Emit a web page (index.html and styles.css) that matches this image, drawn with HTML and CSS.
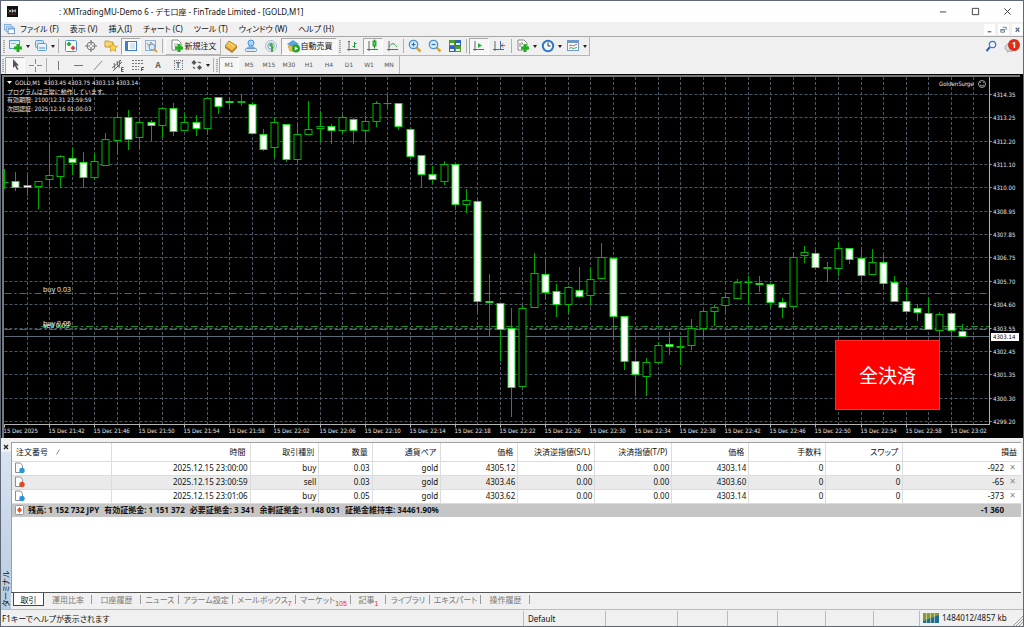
FILE: index.html
```html
<!DOCTYPE html>
<html lang="ja">
<head>
<meta charset="utf-8">
<title>XMTradingMU-Demo 6 - [GOLD,M1]</title>
<link rel="stylesheet" href="styles.css">
</head>
<body>
<div class="window">
  <header class="titlebar">
    <svg class="app-logo" viewBox="0 0 12 12"><rect width="12" height="12" fill="#111"/><path d="M2 4l3 3M5 4L2 7M6 7V4l1.500 2L9 4v3" stroke="#ddd" fill="none"/><path d="M2 9h8" stroke="#944" stroke-width=".6"/></svg>
    <h1 class="title">: XMTradingMU-Demo 6 - デモ口座 - FinTrade Limited - [GOLD,M1]</h1>
    <div class="window-buttons">
      <button aria-label="最小化"><svg viewBox="0 0 10 10"><path d="M1 5.500h7" stroke="#333"/></svg></button>
      <button aria-label="最大化"><svg viewBox="0 0 10 10"><path d="M1.500 1.500h7v7h-7z" stroke="#333" fill="none"/></svg></button>
      <button aria-label="閉じる"><svg viewBox="0 0 10 10"><path d="M1.500 1.500l7 7M8.500 1.500l-7 7" stroke="#333"/></svg></button>
    </div>
  </header>

  <nav class="menubar">
    <svg class="menu-icon" viewBox="0 0 12 12"><rect x=".5" y=".5" width="7" height="6" fill="#e8f2fc" stroke="#7eabd8"/><rect x="2.500" y="2.500" width="7" height="6" fill="#e8f2fc" stroke="#7eabd8"/><rect x="4.500" y="4.500" width="7" height="6" fill="#fff" stroke="#5e95cc"/><path d="M4.500 5.500h7" stroke="#5e95cc"/></svg>
    <button class="menu">ファイル (F)</button>
    <button class="menu">表示 (V)</button>
    <button class="menu">挿入(I)</button>
    <button class="menu">チャート (C)</button>
    <button class="menu">ツール (T)</button>
    <button class="menu">ウィンドウ (W)</button>
    <button class="menu">ヘルプ (H)</button>
    <div class="child-buttons">
      <button aria-label="子ウィンドウを最小化"><svg viewBox="0 0 10 10"><path d="M3 7.500h4" stroke="#5d738c" stroke-width="1.500"/></svg></button>
      <button aria-label="子ウィンドウを元に戻す"><svg viewBox="0 0 10 10"><path d="M4 2.500h4v3M2 5h4v3H2zM2 5.500h4" stroke="#5d738c" fill="none"/></svg></button>
      <button aria-label="子ウィンドウを閉じる"><svg viewBox="0 0 10 10"><path d="M3 3l4 4.500M7 3L3 7.500" stroke="#5d738c" stroke-width="1.500"/></svg></button>
    </div>
  </nav>

  <div class="toolbars">
    <div class="toolbar toolbar-main">
      <i class="grip"></i>
      <button class="tool drop" aria-label="新規チャート"><svg viewBox="0 0 14 14"><rect x=".5" y="1.500" width="10" height="8" fill="#e6f1fb" stroke="#5d9bd3"/><path d="M2 4.500h5" stroke="#8fb9e0"/><path d="M9 5v8M5 9h8" stroke="#1fae1f" stroke-width="3"/></svg></button>
      <button class="tool drop" aria-label="プロファイル"><svg viewBox="0 0 14 14"><rect x="1.500" y="1.500" width="8" height="7" rx="1" fill="#cfe3f6" stroke="#5d9bd3"/><rect x="3.500" y="4.500" width="9" height="7" rx="1" fill="#eaf3fc" stroke="#5d9bd3"/><path d="M5 9h6" stroke="#9bbfe2" stroke-width="2"/></svg></button>
      <i class="sep"></i>
      <button class="tool" aria-label="気配値表示"><svg viewBox="0 0 14 14"><rect x="1.500" y="1.500" width="11" height="11" rx="1" fill="#fff" stroke="#4f90cf"/><path d="M5 2.500L7.500 5 5 7.500 2.500 5z" fill="#20a838"/><path d="M9 6.500L11.500 9 9 11.500 6.500 9z" fill="#e0402c"/></svg></button>
      <button class="tool" aria-label="データウィンドウ"><svg viewBox="0 0 14 14"><circle cx="7" cy="7" r="4" fill="none" stroke="#777"/><path d="M7 1v5M7 8v5M1 7h5M8 7h5" stroke="#777" stroke-width="1.200"/></svg></button>
      <button class="tool" aria-label="ナビゲーター"><svg viewBox="0 0 14 14"><path d="M1 2h4l1 1h3v5H1z" fill="#f7d774" stroke="#c99c32"/><path d="M9 4l1.300 3 3.200.3-2.400 2.100.7 3.100L9 10.800l-2.800 1.700.7-3.100-2.400-2.100 3.200-.3z" fill="#fbd64c" stroke="#cf9a25" stroke-width=".8"/></svg></button>
      <button class="tool pressed" aria-label="ターミナル"><svg viewBox="0 0 14 14"><rect x="1.500" y="2.500" width="11" height="9" fill="#fff" stroke="#3c7fc4"/><path d="M3 3v8" stroke="#3c7fc4" stroke-width="2"/><path d="M6 5h5M6 7h5M6 9h5" stroke="#b9c7d6"/></svg></button>
      <button class="tool" aria-label="ストラテジーテスター"><svg viewBox="0 0 14 14"><rect x="1.500" y="1.500" width="10" height="10" fill="#e3eefa" stroke="#8db2da"/><path d="M3 4l2 3 2-4 2 3" stroke="#c98b62" fill="none"/><circle cx="8" cy="8" r="3" fill="#d7e9fa" stroke="#6d96c2"/><path d="M10 10l3 3" stroke="#d8a63a" stroke-width="2"/></svg></button>
      <i class="sep"></i>
      <button class="tool labelled raised"><svg viewBox="0 0 14 14"><path d="M2 1h6l3 3v7H2z" fill="#fff" stroke="#888"/><path d="M4 5h4M4 7h3" stroke="#aaa"/><path d="M9 5v8M5 9h8" stroke="#1fae1f" stroke-width="3"/></svg>新規注文</button>
      <button class="tool" aria-label="MetaEditor"><svg viewBox="0 0 14 14"><path d="M5 2l8 5-5 5-7-5z" fill="#f2c04a" stroke="#b98420"/><path d="M1 7v2l7 5 5-5V7l-5 5z" fill="#b9822a"/><path d="M5 4l5 3" stroke="#fae3a0"/></svg></button>
      <button class="tool" aria-label="MQL5コミュニティ"><svg viewBox="0 0 14 14"><circle cx="7" cy="4" r="3" fill="#a7d3f5" stroke="#4293d8"/><path d="M2.500 10c0-4 9-4 9 0" fill="#69b0ea"/><rect x="1.500" y="9.500" width="11" height="3" rx="1" fill="#d9e9f7" stroke="#6b99c2"/></svg></button>
      <button class="tool" aria-label="シグナル"><svg viewBox="0 0 14 14"><circle cx="7" cy="7" r="5.500" fill="none" stroke="#a4bfd3"/><circle cx="7" cy="7" r="3.200" fill="none" stroke="#6fa1c5"/><circle cx="7" cy="6" r="1.800" fill="#47a447"/><path d="M8 7v6" stroke="#47a447" stroke-width="2"/></svg></button>
      <button class="tool labelled pressed"><svg viewBox="0 0 14 14"><path d="M1 5l6-4 6 4-3 2H4z" fill="#5aa3dc"/><path d="M2 7h9l-2 5H4z" fill="#f3c247" stroke="#c49226" stroke-width=".6"/><circle cx="10" cy="9.500" r="4" fill="#28a32c"/><path d="M8.800 7.500v4l3.400-2z" fill="#fff"/></svg>自動売買</button>
      <i class="grip"></i>
      <button class="tool" aria-label="バーチャート"><svg viewBox="0 0 14 14"><path d="M3 2v10M1 10.500h11M2 3l1-1 1 1" stroke="#666" fill="none"/><path d="M8.500 3v6M6.500 7.500h2M8.500 4.500h2" stroke="#239b35"/></svg></button>
      <button class="tool pressed" aria-label="ローソク足"><svg viewBox="0 0 14 14"><path d="M3 2v10M1 10.500h11" stroke="#666"/><path d="M8.500 0.500v9" stroke="#168a22"/><rect x="7" y="2" width="3" height="5" fill="#3ed34a" stroke="#168a22" stroke-width=".8"/></svg></button>
      <button class="tool" aria-label="ラインチャート"><svg viewBox="0 0 14 14"><path d="M3 2v10M1 10.500h11" stroke="#666"/><path d="M3 8c3-5 5-4 8 0" stroke="#2da53a" fill="none"/></svg></button>
      <i class="sep thin"></i>
      <button class="tool" aria-label="拡大"><svg viewBox="0 0 14 14"><path d="M8 8l4.500 4.500" stroke="#d8a63a" stroke-width="2.500"/><circle cx="5.500" cy="5.500" r="4.200" fill="#d6ebfb" stroke="#4b92ce" stroke-width="1.300"/><path d="M5.500 3.500v4M3.500 5.500h4" stroke="#2c73b5" stroke-width="1.200"/></svg></button>
      <button class="tool" aria-label="縮小"><svg viewBox="0 0 14 14"><path d="M8 8l4.500 4.500" stroke="#d8a63a" stroke-width="2.500"/><circle cx="5.500" cy="5.500" r="4.200" fill="#d6ebfb" stroke="#4b92ce" stroke-width="1.300"/><path d="M3.500 5.500h4" stroke="#2c73b5" stroke-width="1.200"/></svg></button>
      <button class="tool" aria-label="整列"><svg viewBox="0 0 14 14"><path d="M1 1h6v6H1z" fill="#4f9b2c"/><path d="M7 1h6v6H7z" fill="#2c63c4"/><path d="M1 7h6v6H1z" fill="#2c63c4"/><path d="M7 7h6v6H7z" fill="#4f9b2c"/><path d="M2 4h4v2H2zM8 4h4v2H8zM2 10h4v2H2zM8 10h4v2H8z" fill="#e8f3e4"/></svg></button>
      <i class="sep"></i>
      <button class="tool pressed" aria-label="自動スクロール"><svg viewBox="0 0 14 14"><path d="M3 2v10M1 10.500h11" stroke="#666"/><path d="M6 4l4 2.500L6 9z" fill="#27b33a"/></svg></button>
      <button class="tool" aria-label="チャートシフト"><svg viewBox="0 0 14 14"><path d="M3 2v10M1 10.500h11" stroke="#666"/><path d="M8.500 2v8" stroke="#3a77b5"/><path d="M13 6.500H9M11 4.500l-2 2 2 2" stroke="#d0542a" fill="none"/></svg></button>
      <i class="sep wide"></i>
      <button class="tool drop" aria-label="インディケータ"><svg viewBox="0 0 14 14"><path d="M2 1h6l3 3v7H2z" fill="#fff" stroke="#888"/><path d="M4 4v4M6 3v3" stroke="#777"/><path d="M9 5v8M5 9h8" stroke="#1fae1f" stroke-width="3"/></svg></button>
      <button class="tool drop" aria-label="時間足"><svg viewBox="0 0 14 14"><circle cx="7" cy="7" r="5.200" fill="#f4f9fe" stroke="#2c79c9" stroke-width="2"/><path d="M7 3.500V7h2.500" stroke="#333" fill="none"/></svg></button>
      <button class="tool drop" aria-label="定型チャート"><svg viewBox="0 0 14 14"><rect x="1.500" y="1.500" width="11" height="10" fill="#fff" stroke="#6a9acb"/><path d="M1 3h12" stroke="#6a9acb" stroke-width="2"/><path d="M3 7l2-1 2 1 4-2" stroke="#c25c41" fill="none"/><path d="M3 9.500l2-1 2 1 4-1" stroke="#4ea657" fill="none"/></svg></button>
    </div>

    <div class="toolbar toolbar-draw">
      <i class="grip"></i>
      <button class="tool pressed" aria-label="カーソル"><svg viewBox="0 0 14 14"><path d="M5 1v9l2-2 2 4 1.500-.7-2-3.800H11z" fill="#555"/></svg></button>
      <button class="tool" aria-label="十字カーソル"><svg viewBox="0 0 14 14"><path d="M7.500 1v5M7.500 9v5M1 7.500h5M9 7.500h5" stroke="#888"/></svg></button>
      <i class="sep"></i>
      <button class="tool" aria-label="垂直線"><svg viewBox="0 0 14 14"><path d="M7.500 3v9" stroke="#777"/></svg></button>
      <button class="tool" aria-label="水平線"><svg viewBox="0 0 14 14"><path d="M3 7.500h9" stroke="#777"/></svg></button>
      <button class="tool" aria-label="トレンドライン"><svg viewBox="0 0 14 14"><path d="M3 12l8-9" stroke="#888"/></svg></button>
      <button class="tool" aria-label="チャネル"><svg viewBox="0 0 14 14"><path d="M1 10l9-8M2 13l9-9M3 5l1 6M6 3l1 6M9 2l-1 8" stroke="#666" fill="none"/><path d="M12.500 9.500h-2v4h2M10.500 11.500h2" stroke="#555" fill="none"/></svg></button>
      <button class="tool" aria-label="フィボナッチ"><svg viewBox="0 0 14 14"><path d="M1 2.500h11M1 5.500h11M1 8.500h7M1 11.500h7" stroke="#777" stroke-dasharray="2 1"/><path d="M10.500 13V9.500H13M10.500 11.500h2" stroke="#555" fill="none"/></svg></button>
      <button class="tool letter" aria-label="テキスト">A</button>
      <button class="tool letter" aria-label="ラベル"><span class="label-box">T</span></button>
      <button class="tool drop" aria-label="矢印"><svg viewBox="0 0 14 14"><path d="M4 2l2.500 2.500L4 7 1.500 4.500zM9.500 7L12 9.500 9.500 12 7 9.500z" fill="#555"/><path d="M3 9l2 1.500M8 4l3 1" stroke="#555" stroke-width="1.200"/></svg></button>
      <i class="sep"></i>
      <i class="grip"></i>
      <button class="tool period pressed">M1</button>
      <button class="tool period">M5</button>
      <button class="tool period">M15</button>
      <button class="tool period">M30</button>
      <button class="tool period">H1</button>
      <button class="tool period">H4</button>
      <button class="tool period">D1</button>
      <button class="tool period">W1</button>
      <button class="tool period">MN</button>
    </div>

    <div class="corner-tools">
      <button class="tool" aria-label="検索"><svg viewBox="0 0 14 14"><path d="M2.500 12L6 8" stroke="#2f62c4" stroke-width="2"/><circle cx="8.500" cy="5.500" r="3.200" fill="#eef4ff" stroke="#3d70d0" stroke-width="1.200"/></svg></button>
      <button class="tool notice" aria-label="通知"><svg viewBox="0 0 14 14"><ellipse cx="6" cy="8.500" rx="5" ry="4" fill="#d9d9de" stroke="#aaa"/><path d="M3 11v3l4-2z" fill="#bbb"/></svg><span class="badge">1</span></button>
    </div>
  </div>

  <main class="chart">
    <svg class="chart-canvas" id="chart" viewBox="1 74 1022 364" role="img" aria-label="GOLD,M1"></svg>
    <button class="close-all">全決済</button>
  </main>

  <section class="terminal">
    <aside class="terminal-side">
      <button class="terminal-close" aria-label="ターミナルを閉じる"><svg viewBox="0 0 6 6"><path d="M1 1l4 4M5 1L1 5" stroke="#222" stroke-width="1.300"/></svg></button>
      <div class="terminal-name"><span>ターミナル</span></div>
    </aside>
    <div class="terminal-body">
      <div class="table-area">
        <table class="orders">
          <colgroup><col class="c-id"><col class="c-time"><col class="c-type"><col class="c-lot"><col class="c-pair"><col class="c-std"><col class="c-std"><col class="c-std"><col class="c-std"><col class="c-std"><col class="c-std"><col class="c-profit"></colgroup>
          <thead>
            <tr><th>注文番号 <svg class="sort" viewBox="0 0 4 6"><path d="M.5 5.500l3-5" stroke="#888"/></svg></th><th>時間</th><th>取引種別</th><th>数量</th><th>通貨ペア</th><th>価格</th><th>決済逆指値(S/L)</th><th>決済指値(T/P)</th><th>価格</th><th>手数料</th><th>スワップ</th><th>損益</th></tr>
          </thead>
          <tbody>
            <tr><td><svg class="order-icon" viewBox="0 0 11 12"><path d="M1.500 1h5l2 2.500v7h-7z" fill="#fff" stroke="#8a8f96"/><circle cx="8" cy="8.500" r="2.700" fill="#2795dd"/></svg></td><td>2025.12.15 23:00:00</td><td>buy</td><td>0.03</td><td>gold</td><td>4305.12</td><td>0.00</td><td>0.00</td><td>4303.14</td><td>0</td><td>0</td><td>-922<button class="row-close" aria-label="決済">×</button></td></tr>
            <tr><td><svg class="order-icon" viewBox="0 0 11 12"><path d="M1.500 1h5l2 2.500v7h-7z" fill="#fff" stroke="#8a8f96"/><circle cx="8" cy="8.500" r="2.700" fill="#dc4a25"/></svg></td><td>2025.12.15 23:00:59</td><td>sell</td><td>0.03</td><td>gold</td><td>4303.46</td><td>0.00</td><td>0.00</td><td>4303.60</td><td>0</td><td>0</td><td>-65<button class="row-close" aria-label="決済">×</button></td></tr>
            <tr><td><svg class="order-icon" viewBox="0 0 11 12"><path d="M1.500 1h5l2 2.500v7h-7z" fill="#fff" stroke="#8a8f96"/><circle cx="8" cy="8.500" r="2.700" fill="#2795dd"/></svg></td><td>2025.12.15 23:01:06</td><td>buy</td><td>0.05</td><td>gold</td><td>4303.62</td><td>0.00</td><td>0.00</td><td>4303.14</td><td>0</td><td>0</td><td>-373<button class="row-close" aria-label="決済">×</button></td></tr>
          </tbody>
          <tfoot>
            <tr><td colspan="11"><div class="summary"><svg class="order-icon" viewBox="0 0 11 12"><rect x="1.500" y="1.500" width="8" height="9" rx="1" fill="#fff" stroke="#999"/><path d="M5.500 3l2.500 3-2.500 3L3 6z" fill="#e0502a"/></svg><span>残高: 1 152 732 JPY</span><span>有効証拠金: 1 151 372</span><span>必要証拠金: 3 341</span><span>余剰証拠金: 1 148 031</span><span>証拠金維持率: 34461.90%</span></div></td><td>-1 360</td></tr>
          </tfoot>
        </table>
      </div>
      <nav class="tabs">
        <button class="tab active">取引</button>
        <button class="tab">運用比率</button>
        <button class="tab">口座履歴</button>
        <button class="tab">ニュース</button>
        <button class="tab">アラーム設定</button>
        <button class="tab">メールボックス<sub>7</sub></button>
        <button class="tab">マーケット<sub>105</sub></button>
        <button class="tab">記事<sub>1</sub></button>
        <button class="tab">ライブラリ</button>
        <button class="tab">エキスパート</button>
        <button class="tab">操作履歴</button>
      </nav>
    </div>
  </section>

  <footer class="statusbar">
    <span class="status-help">F1キーでヘルプが表示されます</span>
    <span class="status-profile">Default</span>
    <span></span><span></span><span></span><span></span><span></span><span></span>
    <span class="status-net"><svg viewBox="0 0 16 10"><path d="M0 0h16v4L0 9z" fill="#8a9a2e"/><path d="M0 10V8l16-6v8z" fill="#1f6e96"/><path d="M3.500 0v10M7.500 0v10M11.500 0v10" stroke="#e6ecd8" stroke-width=".6"/></svg>1484012/4857 kb<svg class="size-grip" viewBox="0 0 10 16"><path d="M0 16L10 6M3 16l7-7M6 16l4-4" stroke="#999"/></svg></span>
  </footer>
</div>
<script src="chart.js"></script>
</body>
</html>
```
FILE: styles.css
```css
* { box-sizing: border-box; }

body {
  margin: 0;
  background: #f0f0f0;
  color: #111;
  font: 8px/12px "Noto Sans", "Noto Sans CJK JP", sans-serif;
  font-feature-settings: "palt";
}

button {
  margin: 0;
  padding: 0;
  border: 0;
  background: none;
  color: inherit;
  font: inherit;
  font-feature-settings: inherit;
}

svg { display: block; flex: none; }

.window {
  display: flex;
  flex-direction: column;
  min-height: 100vh;
  border: 1px solid #5f6975;
}

/* Title bar */
.titlebar {
  display: flex;
  align-items: center;
  height: 21px;
  padding-left: 6px;
  background: #fff;
}
.app-logo { width: 11px; height: 11px; }
.title {
  margin: 0 0 0 41px;
  font-size: 8px;
  font-weight: 400;
}
.window-buttons { display: flex; margin-left: auto; }
.window-buttons button {
  display: grid;
  place-items: center;
  width: 32px;
  height: 20px;
}
.window-buttons svg { width: 9px; height: 9px; }

/* Menu */
.menubar {
  display: flex;
  align-items: center;
  gap: 11px;
  height: 14px;
  padding-left: 3px;
}
.menu-icon { width: 11px; height: 11px; margin-right: -6px; }
.child-buttons { display: flex; gap: 3px; margin-left: auto; }
.child-buttons button { padding: 1px; background: #fff; }
.child-buttons svg { width: 9px; height: 9px; }

/* Toolbars */
.toolbars {
  position: relative;
  border-top: 1px solid #a8a8a8;
}
.toolbar {
  display: flex;
  align-items: center;
  width: max-content;
  height: 18px;
  border-right: 1px solid #b5b5b5;
}
.toolbar-main { height: 19px; border-bottom: 1px solid #b5b5b5; }
.grip {
  flex: none;
  width: 2px;
  height: 13px;
  margin: 0 2px;
  background: repeating-linear-gradient(#a9a9a9 0 1px, #e4e4e4 1px 2px);
}
.toolbar-draw .grip { margin: 0 1px; }
.toolbar-draw .drop { width: 24px; gap: 2px; }
.sep {
  flex: none;
  width: 1px;
  height: 14px;
  margin: 0 1px;
  background: #b0b0b0;
}
.toolbar-main .sep { margin: 0 2px 0 1px; }
.toolbar-main .sep.thin { margin: 0 1px 0 0; }
.toolbar-main .sep.wide { margin: 0 2px; }
.tool {
  display: flex;
  align-items: center;
  justify-content: center;
  flex: none;
  width: 20px;
  height: 17px;
}
.tool svg { width: 14px; height: 14px; }
.pressed {
  border: 1px solid;
  border-color: #a6a6a6 #fff #fff #a6a6a6;
  background: #f7f7f7;
}
.raised {
  border: 1px solid;
  border-color: #fff #b5b5b5 #b5b5b5 #fff;
}
.drop { width: 25px; gap: 3px; }
.drop::after {
  border: 2px solid transparent;
  border-top: 3px solid #222;
  border-bottom: 0;
  content: "";
}
.labelled { width: 56px; gap: 1px; }
.letter { color: #666; font-weight: 700; }
.label-box {
  width: 9px;
  border: 1px dotted #777;
  line-height: 8px;
}
.period {
  color: #555;
  font: 6px/10px "DejaVu Sans", sans-serif;
}
.corner-tools {
  position: absolute;
  top: 0;
  right: 2px;
  display: flex;
}
.notice { position: relative; }
.badge {
  position: absolute;
  top: 2px;
  right: 1px;
  width: 12px;
  border-radius: 6px;
  background: #dc2f1b;
  color: #fff;
  font-weight: 700;
  text-align: center;
}

/* Chart */
.chart { position: relative; background: #000; }
.chart-canvas { width: 100%; height: auto; }
.chart-canvas text {
  fill: #e6e6e6;
  font: 6px "DejaVu Sans Condensed", "DejaVu Sans", "Noto Sans CJK JP", sans-serif;
}
.chart-canvas .order { font-family: "Noto Sans", sans-serif; font-size: 7px; }
.chart-canvas .current { fill: #000; }
.grid { fill: none; stroke: #4b5866; stroke-dasharray: 3 2; }
.axis { fill: none; stroke: #b4b4b4; }
.frame { fill: none; stroke: #777; stroke-width: 2; }
.order-line { fill: none; stroke: #149614; stroke-dasharray: 7 3 2 3; }
.price-line { stroke: #5c6b7a; }
.wick { stroke: #00a800; }
.hollow { fill: #000; stroke: #00b800; }
.solid { fill: #fff; stroke: #18e018; }
.close-all {
  position: absolute;
  top: 73%;
  left: 81.6%;
  width: 10.3%;
  height: 19.3%;
  border: 1px solid #ff2a2a;
  background: #f00;
  color: #fff;
  font: 19px/24px "Noto Sans CJK JP", sans-serif;
  font-feature-settings: normal;
}

/* Terminal */
.terminal { display: flex; flex: 1; padding-top: 4px; }
.terminal-side {
  display: flex;
  flex-direction: column;
  flex: none;
  width: 10px;
}
.terminal-close { padding: 2px; }
.terminal-close svg { width: 6px; height: 6px; }
.terminal-name {
  flex: 1;
  padding-top: 2px;
  background: linear-gradient(#b8cbe0, #d7e3f0);
  line-height: 10px;
  text-orientation: sideways;
  transform: rotate(180deg);
  writing-mode: vertical-rl;
}
.terminal-body {
  display: flex;
  flex: 1;
  flex-direction: column;
  min-width: 0;
}
.table-area {
  flex: 1;
  margin-right: 2px;
  border-top: 1px solid #a0a0a0;
  border-left: 1px solid #a0a0a0;
  background: #fff;
}
.orders {
  width: 100%;
  border-collapse: collapse;
  table-layout: fixed;
}
.c-id { width: 9.9%; }
.c-time { width: 13.7%; }
.c-type { width: 6.8%; }
.c-lot { width: 5.3%; }
.c-pair { width: 6.8%; }
.c-std { width: 7.63%; }
.orders th,
.orders td {
  height: 14px;
  padding: 0 2px;
  border-right: 1px solid #dcdcdc;
  border-bottom: 1px solid #dcdcdc;
  text-align: right;
  white-space: nowrap;
}
.orders th { height: 18px; padding: 0 4px; font-weight: 400; }
.orders th:first-child { text-align: left; }
.orders th:last-child,
.orders td:last-child { border-right: 0; }
.sort { display: inline-block; width: 4px; height: 6px; margin-left: 6px; }
.orders tbody tr:nth-child(2) { background: #eaeaea; }
.orders tfoot { background: #c6c6c6; font-weight: 700; }
.orders tfoot td { border: 0; }
.orders tfoot td:last-child { padding-right: 17px; }
.order-icon { width: 11px; height: 12px; }
.summary { display: flex; align-items: center; gap: 5px; }
.summary .order-icon { margin-right: -2px; }
.row-close {
  width: 9px;
  margin: 0 2px 0 4px;
  color: #888;
  font-size: 10px;
  line-height: 10px;
  vertical-align: top;
}

/* Tabs */
.tabs {
  display: grid;
  grid-template-columns: 31px 48px 49px 38px 54px 63px 55px 35px 44px 51px 49px;
  height: 17px;
  margin-right: 2px;
  padding-left: 2px;
  border-top: 1px solid #555;
  color: #777;
}
.tab {
  position: relative;
  height: 13px;
  line-height: 13px;
  white-space: nowrap;
}
.tab:not(.active)::after {
  position: absolute;
  top: 2px;
  right: 0;
  width: 1px;
  height: 9px;
  background: #999;
  content: "";
}
.tab.active {
  border: solid #444;
  border-width: 0 1px 1px;
  background: #fff;
  color: #111;
}
.tab sub {
  color: #f02c2c;
  font-family: "Liberation Sans", sans-serif;
  font-size: 7px;
  line-height: 6px;
  vertical-align: -3px;
}

/* Status bar */
.statusbar {
  display: grid;
  grid-template-columns: 1fr 82px 72px 50px 50px 48px 48px 46px 104px;
  align-items: center;
  height: 17px;
  border-top: 1px solid #bbb;
}
.statusbar span {
  height: 15px;
  padding-left: 4px;
  border-left: 1px solid #bbb;
  line-height: 16px;
}
.statusbar .status-help { padding-left: 1px; border-left: 0; }
.statusbar .status-net { display: flex; align-items: center; gap: 3px; padding-left: 3px; }
.status-net svg { width: 16px; height: 10px; }
.status-net .size-grip { width: 10px; height: 16px; margin-left: auto; }
```
FILE: chart.js
```js
// Each candle: [high, body top, body bottom, low, 1 when filled]
const candles = [
  [169,182,183,189,0],[172,181,188,191,1],[175,185,188,196,1],[181,181,187,209,0],[144,175,180,188,0],
  [155,156,177,187,0],[148,158,163,175,1],[152,162,178,188,1],[154,161,178,180,0],[133,139,166,166,0],
  [115,117,141,155,0],[110,117,140,150,1],[119,122,138,150,0],[120,122,126,141,1],[107,108,126,137,0],
  [103,108,132,136,1],[114,122,131,131,0],[115,122,129,136,1],[97,98,129,135,0],[97,97,107,114,1],
  [98,101,103,109,1],[94,101,103,106,0],[102,104,134,134,1],[129,134,150,151,1],[117,122,148,158,0],
  [124,124,160,162,1],[122,134,160,163,0],[101,129,135,135,0],[111,126,129,142,0],[124,126,131,144,1],
  [115,117,131,133,0],[118,119,131,144,1],[116,121,131,142,0],[101,103,122,127,0],[95,103,104,108,0],
  [103,103,127,130,1],[128,129,157,157,1],[155,155,175,188,1],[166,174,180,183,1],[161,164,182,185,0],
  [164,164,205,207,1],[189,200,205,213,0],[200,201,302,312,1],[274,301,303,337,1],[303,303,330,361,1],
  [308,328,388,417,1],[305,308,387,387,0],[253,273,308,308,0],[259,274,293,299,1],[284,291,305,317,1],
  [286,287,305,313,0],[267,290,297,298,1],[267,279,296,306,0],[243,257,279,279,0],[257,258,317,340,1],
  [316,316,362,370,1],[349,361,375,396,1],[358,362,377,396,0],[342,345,363,363,0],[332,344,347,355,1],
  [337,346,348,365,0],[319,328,346,350,0],[309,311,329,337,0],[305,307,312,326,0],[294,297,306,313,0],
  [279,282,299,299,0],[276,282,283,305,0],[276,283,285,292,1],[284,284,303,308,1],[298,302,308,318,1],
  [253,257,307,307,0],[246,252,256,263,0],[250,253,268,268,1],[262,267,269,282,0],[242,248,269,276,0],
  [248,248,260,264,1],[247,258,276,281,1],[249,262,275,275,0],[255,262,284,287,1],[276,282,302,302,1],
  [288,301,312,312,1],[304,308,313,321,1],[297,313,330,330,1],[312,314,331,340,0],[313,313,331,337,1],
  [324,331,337,337,1]
];
const prices = ["4314.35","4313.25","4312.20","4311.10","4310.00","4308.95","4307.85","4306.75","4305.70","4304.60","4303.55","4302.45","4301.35","4300.30","4299.20"];

const plot = { left: 4.5, right: 989.5, top: 77, bottom: 424.5, step: 11.27 };
const parts = [];
const line = (cls, x1, y1, x2, y2) =>
  parts.push(`<path class="${cls}" d="M${x1} ${y1}L${x2} ${y2}"/>`);
const text = (x, y, value, cls = "") =>
  parts.push(`<text class="${cls}" x="${x}" y="${y}">${value}</text>`);
const half = value => Math.floor(value) + 0.5;

for (let k = 2; k < 88; k += 2) {
  const x = half(plot.left + plot.step * k);
  line("grid", x, plot.top, x, plot.bottom);
}
prices.forEach((price, i) => {
  const y = half(94.3 + 23.38 * i);
  line("grid", plot.left, y, plot.right, y);
  line("axis", plot.right, y, plot.right + 2, y);
  text(993, y + 2, price);
});

line("order-line", plot.left, 293.5, plot.right, 293.5);
line("order-line", 41, 326.5, plot.right, 326.5);
line("order-line", plot.left, 329.5, plot.right, 329.5);
line("price-line", plot.left, 336.5, plot.right, 336.5);

candles.forEach(([high, open, close, low, filled], k) => {
  const x = half(plot.left + plot.step * k);
  const start = k === 0 ? x : x - 3.5;
  line("wick", x, high, x, low);
  parts.push(`<rect class="${filled ? "solid" : "hollow"}" x="${start}" y="${open + 0.5}" width="${x + 3.5 - start}" height="${Math.max(close - open - 1, 0.1)}"/>`);
});

parts.push(`<path class="frame" d="M3 438V76H1020"/>`);
line("axis", plot.left, plot.bottom, plot.right, plot.bottom);
line("axis", plot.right, plot.top, plot.right, plot.bottom + 0.5);
for (let k = 0; k < 22; k++) {
  const x = half(plot.left + plot.step * 4 * k);
  const minute = 38 + 4 * k;
  const label = k === 0 ? "15 Dec 2025" : `15 Dec ${21 + Math.floor(minute / 60)}:${String(minute % 60).padStart(2, "0")}`;
  line("axis", x, plot.bottom, x, plot.bottom + 3);
  text(x - 1, 433, label);
}

parts.push(`<path d="M7 81h5l-2.500 3z" fill="#fff"/>`);
text(15, 85, "GOLD,M1&#160; 4303.45 4303.75 4303.13 4303.14");
text(7, 94, "プログラムは正常に動作しています。");
text(7, 102, "有効期限: 2100.12.31 23:59:59");
text(7, 111, "次回認証: 2025.12.16 01:00:03");
text(939, 86, "GoldenSurge");
parts.push(`<circle cx="982" cy="84" r="3.500" fill="none" stroke="#ccc" stroke-width=".8"/><path d="M980 85q2 2 4 0M980.500 83v-.8M983.500 83v-.8" fill="none" stroke="#ccc" stroke-width=".8"/>`);
text(43, 292, "buy 0.03", "order");
text(43, 326, "buy 0.05", "order");
text(43, 328, "sell 0.03", "order");
parts.push(`<rect x="991" y="333" width="28" height="8" fill="#fff"/>`);
text(993, 339, "4303.14", "current");

document.getElementById("chart").innerHTML = parts.join("");
```
